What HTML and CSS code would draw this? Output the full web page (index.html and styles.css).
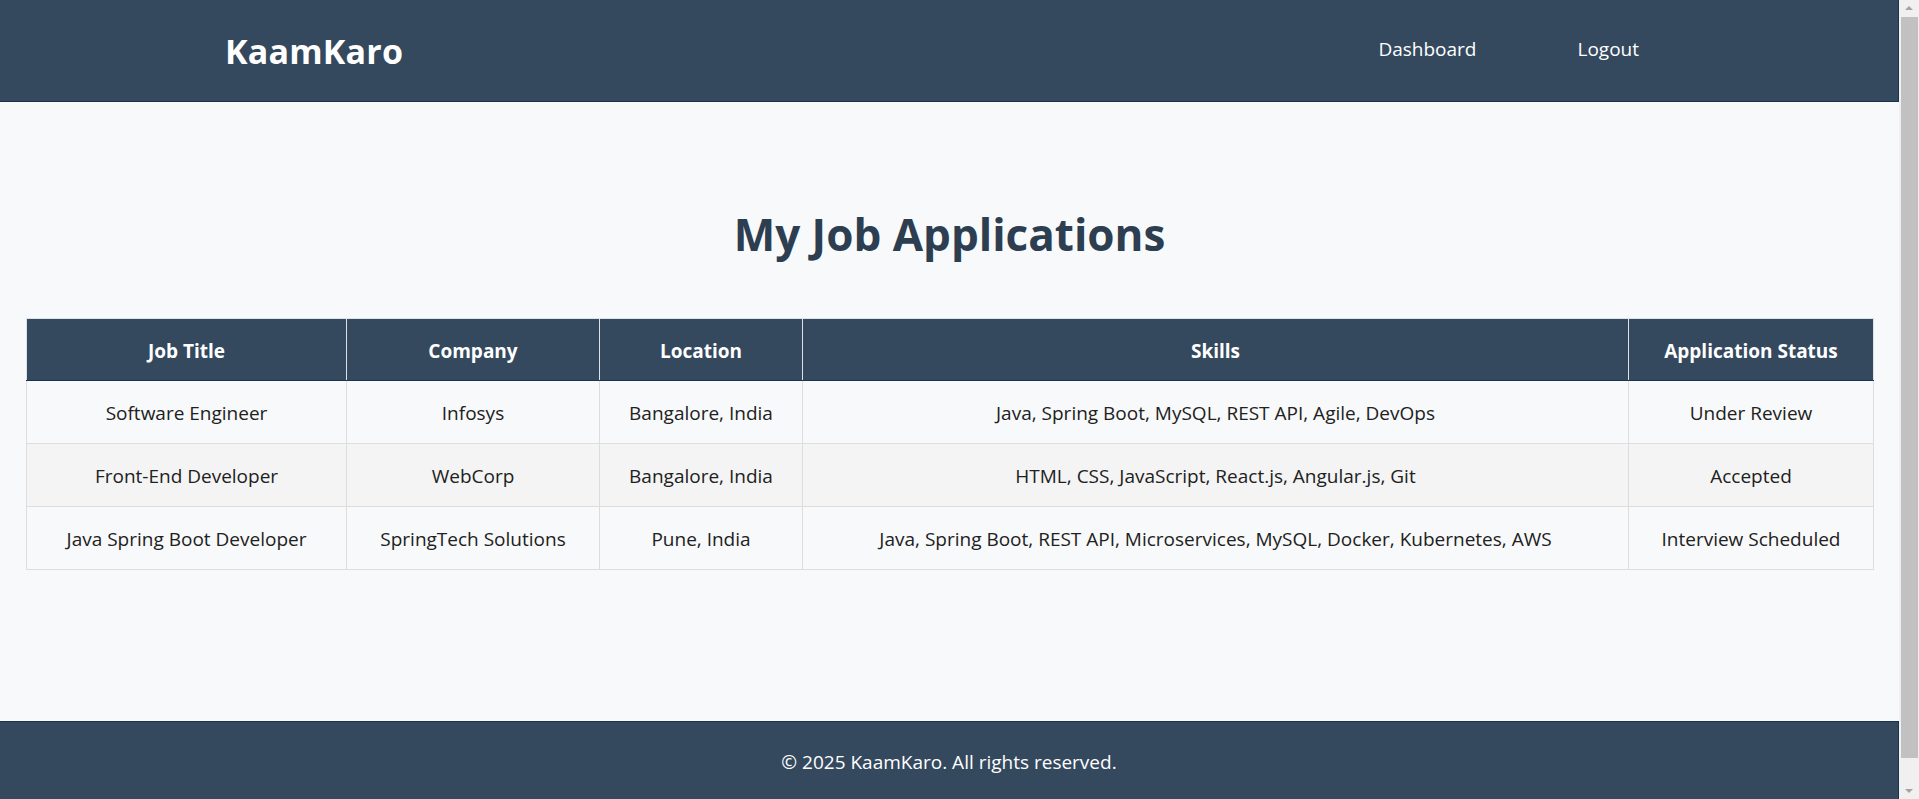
FILE: index.html
```html
<!DOCTYPE html>
<html lang="en">
<head>
<meta charset="utf-8">
<title>My Job Applications - KaamKaro</title>
<link rel="stylesheet" href="styles.css">
</head>
<body>
<header class="site-header">
  <div class="logo">KaamKaro</div>
  <nav class="nav">
    <a href="#" class="nav-link">Dashboard</a>
    <a href="#" class="nav-link">Logout</a>
  </nav>
</header>

<main class="content">
  <h1 class="page-title">My Job Applications</h1>
  <table class="apps">
    <colgroup>
      <col class="c-title">
      <col class="c-company">
      <col class="c-location">
      <col class="c-skills">
      <col class="c-status">
    </colgroup>
    <thead>
      <tr>
        <th>Job Title</th>
        <th>Company</th>
        <th>Location</th>
        <th>Skills</th>
        <th>Application Status</th>
      </tr>
    </thead>
    <tbody>
      <tr>
        <td>Software Engineer</td>
        <td>Infosys</td>
        <td>Bangalore, India</td>
        <td>Java, Spring Boot, MySQL, REST API, Agile, DevOps</td>
        <td>Under Review</td>
      </tr>
      <tr>
        <td>Front-End Developer</td>
        <td>WebCorp</td>
        <td>Bangalore, India</td>
        <td>HTML, CSS, JavaScript, React.js, Angular.js, Git</td>
        <td>Accepted</td>
      </tr>
      <tr>
        <td>Java Spring Boot Developer</td>
        <td>SpringTech Solutions</td>
        <td>Pune, India</td>
        <td>Java, Spring Boot, REST API, Microservices, MySQL, Docker, Kubernetes, AWS</td>
        <td>Interview Scheduled</td>
      </tr>
    </tbody>
  </table>
</main>

<footer class="site-footer">
  <p class="copy">© 2025 KaamKaro. All rights reserved.</p>
</footer>

<div class="scrollbar" aria-hidden="true">
  <span class="sb-arrow sb-up"></span>
  <span class="sb-thumb"></span>
  <span class="sb-arrow sb-down"></span>
</div>
</body>
</html>
```

FILE: styles.css
```css
* {
  box-sizing: border-box;
}

html {
  background: #f8f9fa;
}

body {
  margin: 0 20px 0 0;
  font-family: "Open Sans", "Noto Sans", "Liberation Sans", sans-serif;
  font-size: 19px;
  color: #212121;
  background: #f8f9fa;
  overflow: hidden;
  height: 799px;
}

/* Header */
.site-header {
  display: flex;
  align-items: center;
  justify-content: space-between;
  height: 102px;
  padding: 0 259px 0 225px;
  background: #34495e;
  border-bottom: 1px solid #18344f;
  border-right: 1px solid #18344f;
}

.logo {
  color: #ffffff;
  font-size: 34px;
  line-height: 44px;
  font-weight: 700;
  letter-spacing: 0.2px;
}

.nav {
  display: flex;
  gap: 101px;
  margin-bottom: 3px;
}

.nav-link {
  color: #ffffff;
  text-decoration: none;
  font-size: 19px;
  line-height: 26px;
}

/* Main */
.content {
  padding: 105px 26px 0;
}

.page-title {
  margin: 0 0 57px;
  text-align: center;
  color: #2c3e50;
  font-size: 44px;
  line-height: 54px;
  font-weight: 700;
}

.apps {
  width: 100%;
  table-layout: fixed;
  border-collapse: collapse;
  text-align: center;
}

.c-title { width: 320px; }
.c-company { width: 253px; }
.c-location { width: 203px; }
.c-skills { width: 826px; }
.c-status { width: 245px; }

.apps th,
.apps td {
  border: 1px solid #dddddd;
  padding: 19px 8px 17px;
  line-height: 26px;
}

.apps th {
  background: #34495e;
  color: #ffffff;
  font-weight: 700;
  border-color: #dde3ea;
  padding: 19px 8px 16px;
}

.apps thead tr th {
  border-bottom-color: #18344f;
}

.apps tbody tr:nth-child(even) {
  background: #f4f4f4;
}

/* Footer */
.site-footer {
  position: fixed;
  left: 0;
  right: 20px;
  bottom: 0;
  height: 78px;
  padding-top: 27px;
  background: #34495e;
  border-top: 1px solid #18344f;
  border-right: 1px solid #18344f;
  text-align: center;
}

.copy {
  margin: 0;
  color: #ffffff;
  font-size: 19px;
  line-height: 26px;
}

/* Window scrollbar */
.scrollbar {
  position: fixed;
  top: 0;
  right: 0;
  bottom: 0;
  width: 20px;
  background: #f0f0f0;
}

.sb-thumb {
  position: absolute;
  top: 17px;
  left: 2px;
  right: 1px;
  height: 741px;
  background: #c1c1c1;
}

.sb-arrow {
  position: absolute;
  left: 6px;
  width: 0;
  height: 0;
  border-left: 4px solid transparent;
  border-right: 4px solid transparent;
}

.sb-up {
  top: 6px;
  border-bottom: 4px solid #a3a3a3;
}

.sb-down {
  bottom: 6px;
  border-top: 4px solid #a3a3a3;
}
```
